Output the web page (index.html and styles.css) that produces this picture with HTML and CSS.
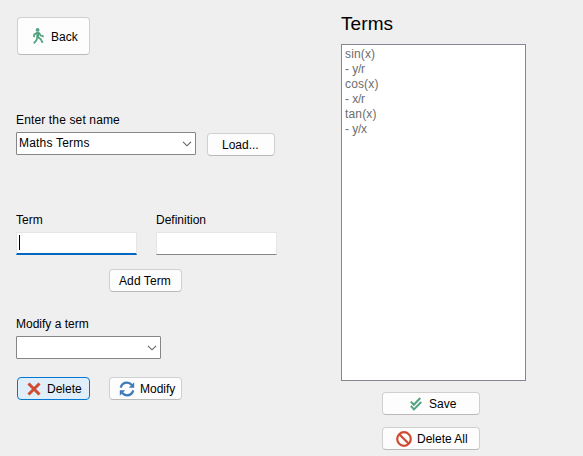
FILE: index.html
```html
<!DOCTYPE html>
<html lang="en">
<head>
<meta charset="utf-8">
<title>Terms</title>
<link rel="stylesheet" href="styles.css">
</head>
<body>
<main class="window">
  <section class="editor">
    <button class="btn back"><svg class="walk" width="12" height="16" viewBox="0 0 12 16"><circle cx="4.6" cy="1.9" r="1.9"/><path d="M3.3 4h3L5.8 9.6H3.4z"/><path d="M4.2 4.9L1.3 6.4.8 9.2M6 4.8l1.5 2.6 3.2 1.3M4.5 8.8L3.4 12.4.8 15.3M5 9l2.8 2.4 1.9 3.4"/></svg><span>Back</span></button>
    <label class="label l-set">Enter the set name</label>
    <div class="row set-row">
      <div class="combo wide"><span class="value">Maths Terms</span><svg width="10" height="6" viewBox="0 0 10 6"><path d="M1 .8l4 4 4-4"/></svg></div>
      <button class="btn load"><span>Load...</span></button>
    </div>
    <div class="row fields">
      <div class="field"><label class="label">Term</label><div class="input focused"><i class="caret"></i></div></div>
      <div class="field"><label class="label">Definition</label><div class="input plain"></div></div>
    </div>
    <button class="btn add"><span>Add Term</span></button>
    <label class="label l-modify">Modify a term</label>
    <div class="combo narrow"><span></span><svg width="10" height="6" viewBox="0 0 10 6"><path d="M1 .8l4 4 4-4"/></svg></div>
    <div class="row actions">
      <button class="btn delete"><svg width="14" height="14" viewBox="0 0 14 14"><path d="M1.5 1.5l11 11M12.5 1.5l-11 11" fill="none" stroke="#d04b32" stroke-width="3"/></svg><span>Delete</span></button>
      <button class="btn modify"><svg width="16" height="16" viewBox="0 0 16 16"><g fill="none" stroke="#3d7ab8" stroke-width="2.3"><path d="M1.7 6.6C2.6 3.4 5 1.7 8 1.7c2 0 3.6.8 4.8 2.2"/><path d="M14.3 9.4c-.9 3.2-3.3 4.9-6.3 4.9-2 0-3.6-.8-4.8-2.2"/></g><path d="M15.2 1.3V6.8H9.8zM.8 14.7V9.2h5.4z" fill="#3d7ab8"/></svg><span>Modify</span></button>
    </div>
  </section>
  <section class="terms">
    <h1>Terms</h1>
    <div class="list">
      <div class="term">sin(x)</div><div class="definition">- y/r</div>
      <div class="term">cos(x)</div><div class="definition">- x/r</div>
      <div class="term">tan(x)</div><div class="definition">- y/x</div>
    </div>
    <button class="btn save"><svg width="12" height="14" viewBox="0 0 12 14"><g fill="none" stroke="#52a380" stroke-width="2"><path d="M.8 4.6l3 3.2L10.3 1"/><path d="M.8 8.8l3.2 3.6L11.2 5"/></g></svg><span>Save</span></button>
    <button class="btn all"><svg width="16" height="16" viewBox="0 0 16 16"><g fill="none" stroke="#d04b32" stroke-width="2.2"><circle cx="8" cy="8" r="6.8"/><path d="M3.2 3.2l9.6 9.6"/></g></svg><span>Delete All</span></button>
  </section>
</main>
</body>
</html>
```
FILE: styles.css
```css
* { box-sizing: border-box; }
body {
  margin: 0;
  width: 583px;
  height: 456px;
  overflow: hidden;
  background: #efefef;
  color: #000;
  font: 12px/14px "Liberation Sans", Arial, sans-serif;
}
.window { display: flex; height: 456px; }
.editor { width: 341px; padding: 17px 0 0 16px; display: flex; flex-direction: column; align-items: flex-start; }
.row { display: flex; }
.btn {
  display: flex;
  align-items: center;
  height: 23px;
  width: 73px;
  flex: none;
  margin: 0;
  padding: 1px 0 0;
  border: 1px solid #d0d0d0;
  border-bottom-color: #bababa;
  border-radius: 4px;
  background: #fdfdfd;
  color: #000;
  font: inherit;
  white-space: nowrap;
}
.btn svg { display: block; flex: none; }
.back { height: 38px; margin-left: 1px; padding-left: 15px; gap: 6px; }
.walk { fill: #52a380; margin-top: -2px; }
.walk path + path { fill: none; stroke: #52a380; stroke-width: 1.8; }
.label { display: block; height: 14px; white-space: nowrap; }
.l-set { margin-top: 58px; letter-spacing: .14px; }
.set-row { margin-top: 5px; gap: 11px; }
.combo {
  display: flex;
  align-items: center;
  justify-content: space-between;
  height: 23px;
  padding: 0 3px 1px 2px;
  border: 1px solid #868686;
  border-radius: 1px;
  background: #fff;
}
.combo svg { fill: none; stroke: #606060; stroke-width: 1.1; margin-top: 2px; }
.value { letter-spacing: .2px; }
.wide { width: 180px; }
.narrow { width: 145px; margin-top: 5px; }
.load { width: 68px; margin-top: 1px; padding-left: 14px; }
.fields { margin-top: 57px; gap: 19px; }
.field { width: 121px; }
.input { height: 23px; margin-top: 5px; background: #fff; border: 1px solid #e5e5e5; }
.focused { border-bottom: 2px solid #0067c0; padding: 2px; }
.plain { width: 121px; border-bottom-color: #868686; }
.caret { display: block; width: 1px; height: 15px; background: #000; }
.add { margin: 14px 0 0 93px; padding-left: 9px; letter-spacing: .1px; }
.l-modify { margin-top: 25px; }
.actions { margin: 18px 0 0 1px; gap: 19px; }
.delete { background: #e0eef9; border-color: #0078d4; padding-left: 9px; gap: 6px; }
.modify { padding-left: 9px; gap: 5px; }
.terms { width: 185px; padding-top: 12px; display: flex; flex-direction: column; align-items: center; }
h1 { align-self: flex-start; margin: 0; height: 24px; font-size: 19px; line-height: 24px; font-weight: 400; letter-spacing: .1px; }
.list {
  width: 185px;
  height: 337px;
  margin-top: 8px;
  padding: 2px 3px;
  border: 1px solid #828790;
  background: #fff;
  color: #6d6d6d;
  line-height: 15px;
}
.term { letter-spacing: .15px; }
.definition { letter-spacing: -.3px; word-spacing: .5px; }
.save { width: 98px; margin: 11px 0 0 -5px; padding-left: 27px; gap: 7px; }
.all { width: 98px; margin: 12px 0 0 -5px; padding-left: 13px; gap: 5px; }
```
